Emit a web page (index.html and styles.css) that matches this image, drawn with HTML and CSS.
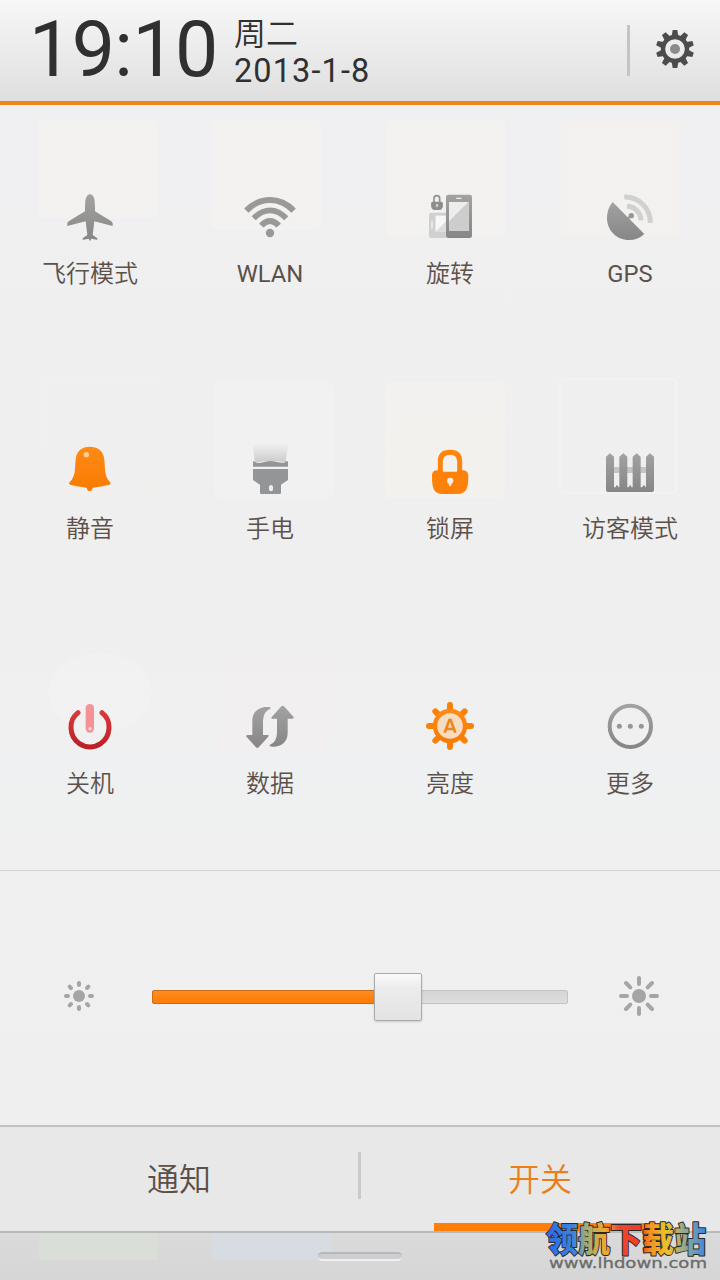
FILE: index.html
```html
<!DOCTYPE html>
<html lang="zh-CN">
<head>
<meta charset="utf-8">
<title>开关</title>
<link rel="stylesheet" href="styles.css">
</head>
<body>
<svg class="defs" width="0" height="0" aria-hidden="true">
  <defs>
    <linearGradient id="gray" x1="0" y1="0" x2="0" y2="1"><stop offset="0" stop-color="#a2a2a1"/><stop offset="1" stop-color="#868686"/></linearGradient>
    <linearGradient id="orange" x1="0" y1="0" x2="0" y2="1"><stop offset="0" stop-color="#ff8a16"/><stop offset="1" stop-color="#f87b02"/></linearGradient>
    <linearGradient id="red" x1="0" y1="0" x2="0" y2="1"><stop offset="0" stop-color="#d8393d"/><stop offset="1" stop-color="#bb2025"/></linearGradient>
    <linearGradient id="beam" x1="0" y1="0" x2="0" y2="1"><stop offset="0" stop-color="#ccc" stop-opacity="0"/><stop offset="1" stop-color="#cacaca"/></linearGradient>
    <linearGradient id="rainbow" gradientUnits="userSpaceOnUse" x1="0" y1="8" x2="160" y2="0">
      <stop offset="0" stop-color="#2b6be8"/><stop offset=".17" stop-color="#3d82df"/><stop offset=".25" stop-color="#a3ad76"/><stop offset=".37" stop-color="#f0a92c"/><stop offset=".46" stop-color="#ee4630"/><stop offset=".58" stop-color="#f13c25"/><stop offset=".65" stop-color="#f29321"/><stop offset=".75" stop-color="#edc02c"/><stop offset=".85" stop-color="#9dac86"/><stop offset="1" stop-color="#3685eb"/>
    </linearGradient>
  </defs>
</svg>
<div class="screen">
  <header class="header">
    <div class="clock">19:10</div>
    <div class="date"><div class="weekday">周二</div><div class="day">2013-1-8</div></div>
    <div class="header-rule"></div>
    <svg class="gear" viewBox="165 87 120 120">
      <g transform="translate(225 147)" fill="#4c4c4c">
        <g id="teeth"><path id="tooth" d="M-10-38L-7-57H7L10-38Z"/><use href="#tooth" transform="rotate(36)"/><use href="#tooth" transform="rotate(72)"/><use href="#tooth" transform="rotate(108)"/><use href="#tooth" transform="rotate(144)"/></g>
        <use href="#teeth" transform="rotate(180)"/>
        <circle r="36" fill="none" stroke="#4c4c4c" stroke-width="13"/>
        <circle r="15" fill="#8b8b8b"/>
      </g>
    </svg>
  </header>

  <main class="toggles">
    <div class="ghost g1"></div><div class="ghost g2"></div><div class="ghost g3"></div><div class="ghost g4"></div>
    <div class="ghost g5"></div><div class="ghost g6"></div><div class="ghost g7"></div><div class="ghost g8"></div>
    <div class="ghost g9"></div><div class="ghost g10"></div>
    <div class="tile">
      <svg class="icon" viewBox="102 0 216 216"><path fill="url(#gray)" d="M210 43Q219 43 223 57Q225 64 225 94L274 124Q280 128 278 138L223 124L218 165L231 174Q235 179 230 179L214 176L210 184L206 176L190 179Q185 179 189 174L202 165L197 124L142 138Q140 128 146 124L195 94Q195 64 197 57Q201 43 210 43Z"/></svg>
      <span class="label">飞行模式</span>
    </div>
    <div class="tile">
      <svg class="icon" viewBox="642 0 216 216"><g fill="none" stroke="#999998"><path stroke-width="18" d="M679 92Q710 60 750 60T821 92"/><path stroke-width="17" d="M701 115Q724 91 750 91T799 115"/><path stroke-width="18" d="M724 137Q736 123 750 123T776 137"/></g><circle cx="750" cy="159" r="12.5" fill="#989898"/></svg>
      <span class="label latin">WLAN</span>
    </div>
    <div class="tile">
      <svg class="icon" viewBox="102 0 216 216"><path fill="#cfd0d0" fill-rule="evenodd" d="M155 98H198V174H155Q147 174 147 166V106Q147 98 155 98ZM167 107V155H197V107ZM154 122V146H158V122Z"/><path fill="#f7f7f7" d="M167 107H197V125L167 155Z"/><path fill="#dbdbdb" d="M167 155L197 125V155Z"/><rect x="198" y="44" width="78" height="130" rx="7" fill="url(#gray)"/><path fill="#cdcdcd" d="M207 66H267V153H207Z"/><path fill="#ededed" d="M207 66H265L207 124Z"/><rect x="228" y="53" width="17" height="4" rx="2" fill="#eee"/><path d="M162 68V55Q162 47 170.500 47T179 55V68" fill="none" stroke="#929292" stroke-width="5"/><path fill="#8e8e8e" d="M157 65H185Q189 66 189 72Q189 90 178 90H164Q153 90 153 72Q153 66 157 65Z"/><path fill="#e8e8e8" d="M168 75a3 3 0 1 1 6 0l-2 7h-2z"/></svg>
      <span class="label">旋转</span>
    </div>
    <div class="tile">
      <svg class="icon" viewBox="642 0 216 216"><g fill="none" stroke="#d0d0d0" stroke-width="15"><path d="M733 51A76 76 0 0 1 811 129"/><path d="M741 79A43 43 0 0 1 783 121"/></g><path fill="url(#gray)" d="M698 66L793 162Q774 180 747 180C709 180 681 151 681 114Q681 87 698 66Z"/><path d="M741 117L755 107" stroke="#999" stroke-width="7"/><circle cx="754" cy="107" r="8" fill="#979797"/></svg>
      <span class="label latin">GPS</span>
    </div>
    <div class="tile">
      <svg class="icon" viewBox="102 15 216 216"><path fill="url(#orange)" d="M210 50C236 50 251 65 253 88L255 116Q256 143 270 156Q274 162 268 164Q244 170 218 173Q216 183 209 183T200 173Q174 170 151 164Q145 162 149 156Q164 142 165 116L167 88C169 64 184 50 210 50Z"/><circle cx="199" cy="74" r="8" fill="#ffcb91"/></svg>
      <span class="label">静音</span>
    </div>
    <div class="tile">
      <svg class="icon" viewBox="642 15 216 216"><path fill="url(#beam)" d="M697 40H805L797 97Q775 93 750 93T710 98Q705 98 704 92Z"/><path fill="#949596" d="M699 94Q705 94 709 99Q725 99 736 95Q752 91 768 95Q782 99 793 98Q797 93 804 94V110H699ZM699 117H804V150L783 164V188Q783 192 779 192H724Q720 192 720 188V164L699 150Z"/><rect x="747" y="165" width="12" height="19" rx="6" fill="#eee"/></svg>
      <span class="label">手电</span>
    </div>
    <div class="tile">
      <svg class="icon" viewBox="102 15 216 216"><path d="M181 124V94Q181 67 210 67T239 94V124" fill="none" stroke="#ff850c" stroke-width="15"/><path fill="#fe810a" d="M163 122Q186 117 190 125H230Q234 117 257 122Q265 126 265 141C265 177 257 192 232 192H188C163 192 156 177 156 141Q155 126 163 122Z"/><path fill="#f4eee6" d="M206 161Q201 158 201 153A9.500 9.500 0 0 1 220 153Q220 158 215 161L213 168H208Z"/></svg>
      <span class="label">锁屏</span>
    </div>
    <div class="tile">
      <svg class="icon" viewBox="642 15 216 216"><path fill="#c5c5c5" d="M695 111H805V129H695Z"/><path fill="url(#gray)" d="M678 80L690 70L702 80V172H706L711 164L716 172H718V80L730 70L742 80V172H745L751 164L755 172H758V80L770 70L782 80V172H786L792 164L797 172H798V80L810 70L822 80V180Q822 186 816 186H684Q678 186 678 180Z"/></svg>
      <span class="label">访客模式</span>
    </div>
    <div class="tile">
      <svg class="icon" viewBox="102 0 216 216"><path d="M174 68C143 91 148 139 177 160Q193 171 210 171T243 160C272 139 277 91 246 68" fill="none" stroke="url(#red)" stroke-width="15" stroke-linecap="round"/><rect x="197" y="42" width="25" height="86" rx="12.500" fill="#f49296"/><circle cx="210" cy="116" r="5" fill="#fbdfe0"/></svg>
      <span class="label">关机</span>
    </div>
    <div class="tile">
      <svg class="icon" viewBox="642 0 216 216"><path fill="url(#gray)" d="M751 52C724 46 697 61 697 91V135H683Q676 136 680 141L708 172Q712 176 716 172L744 141Q749 136 743 135H729V91Q730 64 751 56Z"/><path fill="url(#gray)" d="M749 169C776 175 803 160 803 130V86H817Q824 85 820 80L792 49Q788 45 784 49L756 80Q751 85 757 86H771V130Q770 157 749 165Z"/></svg>
      <span class="label">数据</span>
    </div>
    <div class="tile">
      <svg class="icon" viewBox="102 0 216 216"><g stroke="#fa8108" stroke-width="18" stroke-linecap="round"><path d="M210 45V171M147 108H273M166 64L254 152M254 64L166 152"/></g><circle cx="210" cy="108" r="45" fill="#f6dcc0" stroke="url(#orange)" stroke-width="13"/><path d="M194 128L208 90H212L226 128M199 117H221" fill="none" stroke="#ef871d" stroke-width="8"/></svg>
      <span class="label">亮度</span>
    </div>
    <div class="tile">
      <svg class="icon" viewBox="642 0 216 216"><circle cx="751" cy="109" r="62" fill="none" stroke="url(#gray)" stroke-width="12"/><g fill="#969696"><circle cx="718" cy="109" r="7.500"/><circle cx="751" cy="109" r="7.500"/><circle cx="784" cy="109" r="7.500"/></g></svg>
      <span class="label">更多</span>
    </div>
  </main>

  <section class="brightness">
    <svg class="sun" viewBox="-60 -60 120 120"><circle r="18" fill="#a5a5a5"/><path stroke="#a5a5a5" stroke-width="12" stroke-linecap="round" d="M0-39V-33M0 39V33M-39 0H-33M39 0H33M-28-28L-24-24M28-28L24-24M-28 28L-24 24M28 28L24 24"/></svg>
    <div class="slider"><div class="fill"></div><div class="thumb"></div></div>
    <svg class="sun" viewBox="-60 -60 120 120"><circle r="21" fill="#a5a5a5"/><path stroke="#a5a5a5" stroke-width="12" stroke-linecap="round" d="M0-54V-36M0 54V36M-54 0H-36M54 0H36M-39-39L-26-26M39-39L26-26M-39 39L-26 26M39 39L26 26"/></svg>
  </section>

  <nav class="tabs">
    <div class="tab">通知</div>
    <div class="tab-rule"></div>
    <div class="tab active">开关</div>
  </nav>
  <footer class="tray"><div class="handle"></div></footer>

  <svg class="brand" viewBox="0 0 166 70">
    <text class="brand-name" x="1" y="48" textLength="160" lengthAdjust="spacingAndGlyphs" fill="url(#rainbow)">领航下载站</text>
    <text class="brand-url" x="4" y="64" textLength="158" lengthAdjust="spacingAndGlyphs">www.lhdown.com</text>
  </svg>
</div>
</body>
</html>
```
FILE: styles.css
```css
* { box-sizing: border-box; }
body { margin: 0; font-family: Roboto, "Noto Sans CJK SC", sans-serif; }
.defs { position: absolute; }
.screen {
  position: relative;
  width: 720px;
  height: 1280px;
  overflow: hidden;
  display: flex;
  flex-direction: column;
  background: linear-gradient(#eff0f2, #efefef 45%, #eff0f1 60%, #efefee);
}
.header {
  height: 105px;
  flex: none;
  display: flex;
  padding-left: 29px;
  border-bottom: 4px solid #f08519;
  background: linear-gradient(#f7f7f7, #dfdfdf);
  color: #303030;
}
.clock { width: 205px; font-size: 77px; line-height: 92px; padding-top: 4px; letter-spacing: -.6px; }
.date { flex: 1; }
.weekday { font-family: "Noto Sans CJK SC DemiLight", "Noto Sans CJK SC", sans-serif; font-size: 32px; line-height: 36px; padding-top: 13px; height: 52px; font-weight: 350; }
.day { font-size: 32.5px; line-height: 38px; letter-spacing: 1.1px; }
.header-rule { width: 3px; height: 51px; margin: 25px 25px 0 0; background: #c4c4c4; }
.gear { width: 40px; height: 40px; margin: 29px 25px 0 0; }

.toggles {
  position: relative;
  height: 766px;
  flex: none;
  display: grid;
  grid-template-columns: repeat(4, 180px);
  grid-template-rows: repeat(3, 255px);
  border-bottom: 1px solid #d2d2d2;
}
.tile { position: relative; display: flex; flex-direction: column; align-items: center; padding-top: 75px; }
.icon { width: 72px; height: 72px; }
.label {
  margin-top: 2px;
  font-family: "Noto Sans CJK SC DemiLight", "Noto Sans CJK SC", sans-serif;
  font-size: 24px;
  line-height: 36px;
  color: #5c504a;
  white-space: nowrap;
  font-weight: 350;
}
.label.latin { margin-top: 4px; font-family: Roboto, sans-serif; font-size: 23.8px; font-weight: 400; }

.ghost { position: absolute; width: 120px; height: 116px; border-radius: 6px; background: rgba(255, 250, 238, .22); }
.g1 { left: 38px; top: 15px; height: 98px; }
.g2 { left: 212px; top: 15px; width: 110px; height: 110px; }
.g3 { left: 386px; top: 15px; }
.g4 { left: 560px; top: 15px; border: 4px solid rgba(246, 238, 234, .4); }
.g5 { left: 41px; top: 273px; border: 3px solid rgba(250, 240, 230, .4); background: none; }
.g6 { left: 214px; top: 277px; background: rgba(255, 255, 255, .12); }
.g7 { left: 385px; top: 277px; }
.g8 { left: 558px; top: 273px; border: 3px solid rgba(250, 248, 248, .3); background: none; }
.g9 { left: 48px; top: 548px; width: 104px; height: 80px; border-radius: 50%; background: rgba(248, 248, 244, .25); }
.g10 { left: 217px; top: 548px; width: 112px; height: 100px; background: rgba(246, 236, 238, .25); }

.brightness {
  height: 254px;
  flex: none;
  display: flex;
  align-items: center;
  justify-content: space-between;
  padding: 0 61px 4px 59px;
}
.sun { width: 40px; height: 40px; }
.slider {
  position: relative;
  width: 416px;
  height: 14px;
  margin: 2px 0 0 2px;
  border: 1px solid #c3c3c3;
  border-radius: 2px;
  background: linear-gradient(#d5d5d5, #dddddd);
}
.fill { width: 224px; height: 14px; margin: -1px; border: 1px solid #c96d1b; border-radius: 2px 0 0 2px; background: linear-gradient(#ff8d20, #ff7f08 70%); }
.thumb {
  position: absolute;
  left: 221px;
  top: -18px;
  width: 48px;
  height: 48px;
  border: 1px solid #aaa;
  border-radius: 2px;
  background: linear-gradient(#fafafa, #ececec 30%, #e3e3e3);
  box-shadow: 0 1px 2px rgba(0, 0, 0, .15);
}

.tabs {
  height: 108px;
  flex: none;
  display: flex;
  padding-right: 1px;
  border-top: 2px solid #c1c3c3;
  border-bottom: 2px solid #b8b9b9;
  background: #e8e8e8;
}
.tab { flex: 1; text-align: center; font-family: "Noto Sans CJK SC DemiLight", "Noto Sans CJK SC", sans-serif; font-size: 32px; line-height: 100px; height: 104px; color: #5b4f49; font-weight: 350; }
.tab.active { color: #ec7e16; position: relative; }
.tab.active::after { content: ""; position: absolute; left: 73px; bottom: 0; width: 213px; height: 8px; background: #ff7e05; }
.tab-rule { width: 3px; height: 47px; margin: 25px 0 0 0; background: #cacaca; }
.tray {
  flex: 1;
  background:
    linear-gradient(#d9ded7, #d9ded7) 39px 0 / 119px 27px no-repeat,
    linear-gradient(#d7dce2, #d7dce2) 212px 0 / 120px 27px no-repeat,
    linear-gradient(#dadada, #d5d6d5);
}
.handle { width: 84px; height: 9px; margin: 19px auto 0; border-radius: 5px; border-top: 2px solid #b6b8bb; border-bottom: 2px solid #f0f0f0; background: #ccced0; }
.brand { position: absolute; left: 545px; top: 1204px; width: 166px; height: 70px; overflow: visible; }
.brand-name { font: 900 34px "Noto Sans CJK SC", sans-serif; stroke: #292929; stroke-width: 2px; stroke-linejoin: round; paint-order: stroke; }
.brand-url { font: 14px "DejaVu Sans", sans-serif; fill: #6b6b6b; stroke: #6b6b6b; stroke-width: .3px; }
```
